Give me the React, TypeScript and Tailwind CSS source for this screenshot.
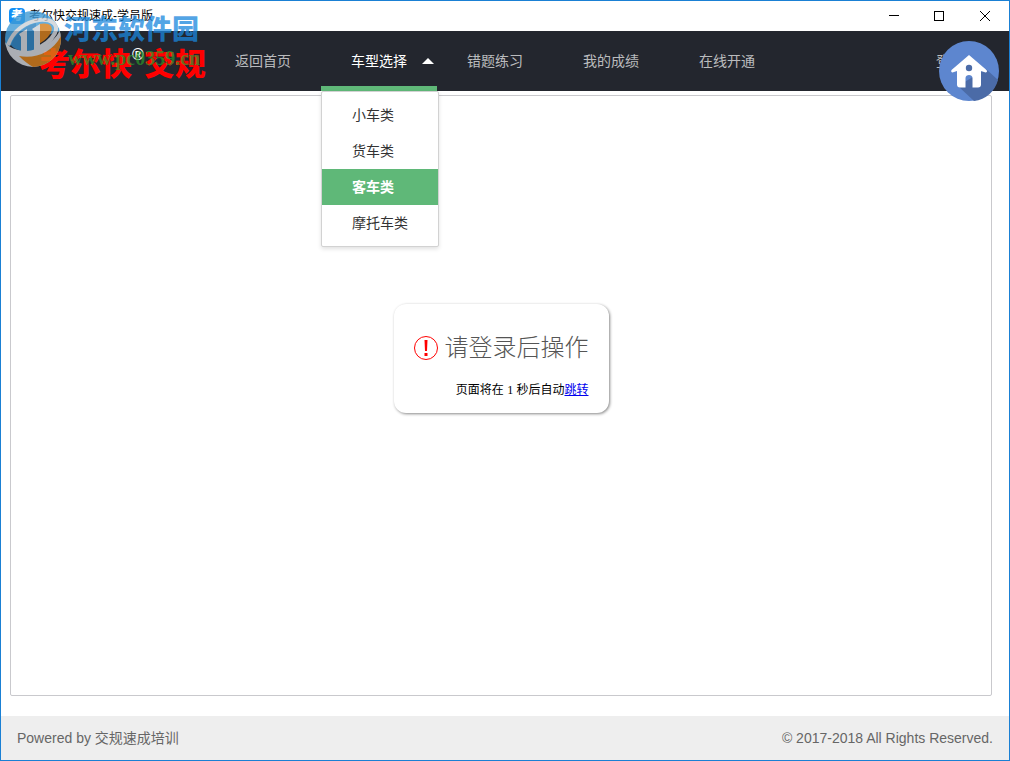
import { useState } from 'react';

const navItems = ['返回首页', '车型选择', '错题练习', '我的成绩', '在线开通'];
const carTypes = ['小车类', '货车类', '客车类', '摩托车类'];

function TitleBar() {
  return (
    <div className="flex h-[30px] items-center justify-between bg-white">
      <div className="flex items-center gap-1 pl-2">
        <span className="flex h-4 w-4 items-center justify-center rounded bg-[#1490f5] text-xs font-black text-white">
          考
        </span>
        <span className="text-xs text-black">考尔快交规速成-学员版</span>
      </div>
      <div className="flex h-full">
        <button aria-label="最小化" className="flex w-[46px] items-center justify-center">
          <svg width="10" height="10" shapeRendering="crispEdges">
            <path d="M0 4.5h10" stroke="#000" />
          </svg>
        </button>
        <button aria-label="最大化" className="flex w-11 items-center justify-center">
          <svg width="10" height="10" shapeRendering="crispEdges">
            <path d="M.5 .5h9v9h-9z" stroke="#000" fill="none" />
          </svg>
        </button>
        <button aria-label="关闭" className="flex w-12 items-center justify-center">
          <svg width="10" height="10">
            <path d="M0 0l10 10M10 0L0 10" stroke="#000" />
          </svg>
        </button>
      </div>
    </div>
  );
}

function Watermark() {
  return (
    <div className="pointer-events-none absolute top-[10px] left-1 z-20 flex items-start gap-[3px]">
      <svg width="56" height="56" viewBox="0 0 56 56" className="opacity-80">
        <defs>
          <clipPath id="disc">
            <circle cx="28" cy="28" r="28" />
          </clipPath>
        </defs>
        <g clipPath="url(#disc)">
          <path d="M0 0h56v20L0 36z" fill="#3f9ad6" />
          <path d="M0 31c8 12 32 10 44 1 7-5 10-10 12-16v40H0z" fill="#cdd1d6" />
          <path d="M14 45c16 3 33-3 42-20v31H28c-5-3-9-6-14-11z" fill="#d47c18" />
          <path
            d="M3 34C8 20 20 11 34 9c12-1 20 4 16 13-4 8-13 14-22 17"
            fill="none"
            stroke="#cdd1d6"
            strokeWidth="4"
          />
          <path d="M6 34c3-10 13-19 25-22v26c-8 3-20 3-25-4z" fill="#2e80bd" />
          <path d="M34 13c9-2 15 1 12 8-2 5-7 9-12 12z" fill="#d47c18" />
          <path d="M14 23l8-5v22h-6V26zM27 18l8-5v26h-6V20z" fill="#cdd1d6" />
        </g>
      </svg>
      <div className="flex flex-col pt-[2px]">
        <span className="text-[27px] leading-[34px] font-black text-[#1a87dd]/75">
          河东软件园
        </span>
        <span className="pl-1 font-['Liberation_Serif',serif] text-xl leading-[22px] font-bold text-[#2a9a2a]/70">
          www.pc0359.cn
        </span>
      </div>
    </div>
  );
}

function Logo() {
  return (
    <a
      href="#"
      className="flex w-[204px] shrink-0 pt-3 pl-[38px] text-[31px] leading-[44px] font-black whitespace-nowrap text-[#ff0000]">
      考尔快
      <span className="w-[14px] pt-1 text-center text-base leading-4 font-bold text-white">
        ®
      </span>
      交规
    </a>
  );
}

function CarTypeMenu() {
  const [selected, setSelected] = useState('客车类');

  return (
    <div className="absolute top-[60px] left-0 z-10 w-[118px] rounded-xs border border-[#d2d2d2] bg-white py-[5px] shadow-[0_2px_4px_rgba(0,0,0,0.12)]">
      {carTypes.map((type) => (
        <button
          key={type}
          onClick={() => setSelected(type)}
          className={`block h-9 w-full pl-[30px] text-left ${
            type === selected
              ? 'bg-[#5fb878] font-bold text-white'
              : 'text-[#333]'
          }`}>
          {type}
        </button>
      ))}
    </div>
  );
}

function HomeButton() {
  return (
    <button
      aria-label="首页"
      className="absolute top-10 right-[10px] z-20 h-[60px] w-[60px]">
      <svg width="60" height="60" viewBox="0 0 60 60">
        <circle cx="30" cy="30" r="30" fill="#5d86cf" />
        <path d="M47 28l12 11C56 50 47 59 35 60L19 45z" fill="#4b6ba7" />
        <path
          d="M30 14L12.500 29c-1 2 .5 3 2.500 2l3-1v13.500c0 2 1 3 3 3h5.500V37c0-4 7-4 7 0v9.500H39c2 0 3-1 3-3V30l3 1c2 1 4 0 2.500-2z"
          fill="#fff"
        />
        <circle cx="30" cy="27" r="3.200" fill="#4b6ba7" />
      </svg>
    </button>
  );
}

export default function App() {
  return (
    <div className="relative flex min-h-screen flex-col border border-[#1a80d4] bg-white font-['Liberation_Sans','Noto_Sans_CJK_SC',sans-serif] text-sm">
      <TitleBar />
      <Watermark />
      <HomeButton />

      <header className="flex h-[60px] bg-[#23262e]">
        <Logo />
        <nav className="flex flex-1">
          {navItems.map((item) =>
            item === '车型选择' ? (
              <div key={item} className="relative w-[116px]">
                <a
                  href="#"
                  className="flex h-full items-center gap-[15px] border-b-[5px] border-[#5fb878] pt-[5px] pl-[30px] whitespace-nowrap text-white">
                  {item}
                  <svg width="12" height="6" className="shrink-0">
                    <path d="M6 0l6 6H0z" fill="#fff" />
                  </svg>
                </a>
                <CarTypeMenu />
              </div>
            ) : (
              <a
                key={item}
                href="#"
                className="flex w-[116px] items-center pl-[30px] text-white/70">
                {item}
              </a>
            )
          )}
        </nav>
        <a href="#" className="flex items-center pr-[45px] text-white/70">
          登录
        </a>
      </header>

      <main className="flex flex-1 pt-1 pr-[17px] pb-5 pl-[9px]">
        <div className="flex flex-1 items-start justify-center rounded-xs border border-[#c9c9cd] pt-52">
          <div className="flex flex-col rounded-xl px-5 pt-7 pb-[14px] shadow-[1px_1px_3px_#888]">
            <div className="flex items-center gap-[7px]">
              <svg width="24" height="24" viewBox="0 0 24 24">
                <circle cx="12" cy="12" r="11.500" fill="none" stroke="#f00" />
                <path d="M10.500 4h3l-.5 11h-2zM10.500 17h3v3h-3z" fill="#f00" />
              </svg>
              <h1 className="text-2xl font-light text-[#555]">请登录后操作</h1>
            </div>
            <p className="pt-[17px] text-right text-xs leading-[18px] text-black">
              页面将在 <span className="font-['Liberation_Serif',serif]">1</span> 秒后自动
              <a href="#" className="text-[#0000ee] underline">
                跳转
              </a>
            </p>
          </div>
        </div>
      </main>

      <footer className="flex h-11 items-center justify-between bg-[#eee] px-4 text-[#666]">
        <p>Powered by 交规速成培训</p>
        <p>© 2017-2018 All Rights Reserved.</p>
      </footer>
    </div>
  );
}
